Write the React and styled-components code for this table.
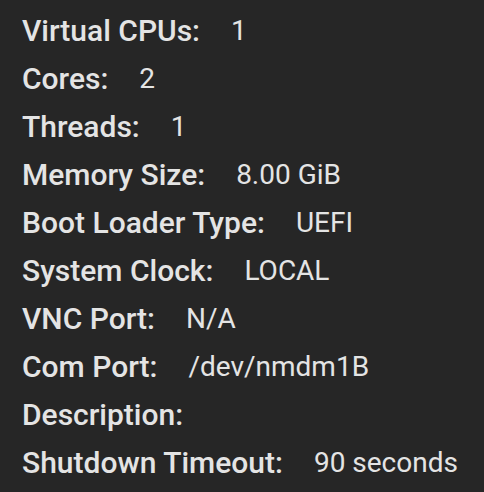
import React from "react";
import styled, { createGlobalStyle } from "styled-components";

const Global = createGlobalStyle`
  html, body { margin: 0; padding: 0; background: #262626; }
  body { font-family: Roboto, "Noto Sans", sans-serif; }
`;

const List = styled.dl`
  margin: 0;
  padding: 6px 22px;
  display: flex;
  flex-direction: column;
`;

const Row = styled.div`
  display: flex;
  align-items: center;
  height: 48px;
  gap: 31px;
  color: #e4e4e4;
`;

const Label = styled.dt`
  margin: 0;
  font-size: 30px;
  font-weight: 500;
`;

const Value = styled.dd`
  margin: 0;
  font-size: 28px;
  font-weight: 400;
`;

const rows = [
  ["Virtual CPUs:", "1"],
  ["Cores:", "2"],
  ["Threads:", "1"],
  ["Memory Size:", "8.00 GiB"],
  ["Boot Loader Type:", "UEFI"],
  ["System Clock:", "LOCAL"],
  ["VNC Port:", "N/A"],
  ["Com Port:", "/dev/nmdm1B"],
  ["Description:", ""],
  ["Shutdown Timeout:", "90 seconds"],
];

export default function App() {
  return (
    <>
      <Global />
      <List>
        {rows.map(([l, v]) => (
          <Row key={l}>
            <Label>{l}</Label>
            <Value>{v}</Value>
          </Row>
        ))}
      </List>
    </>
  );
}
